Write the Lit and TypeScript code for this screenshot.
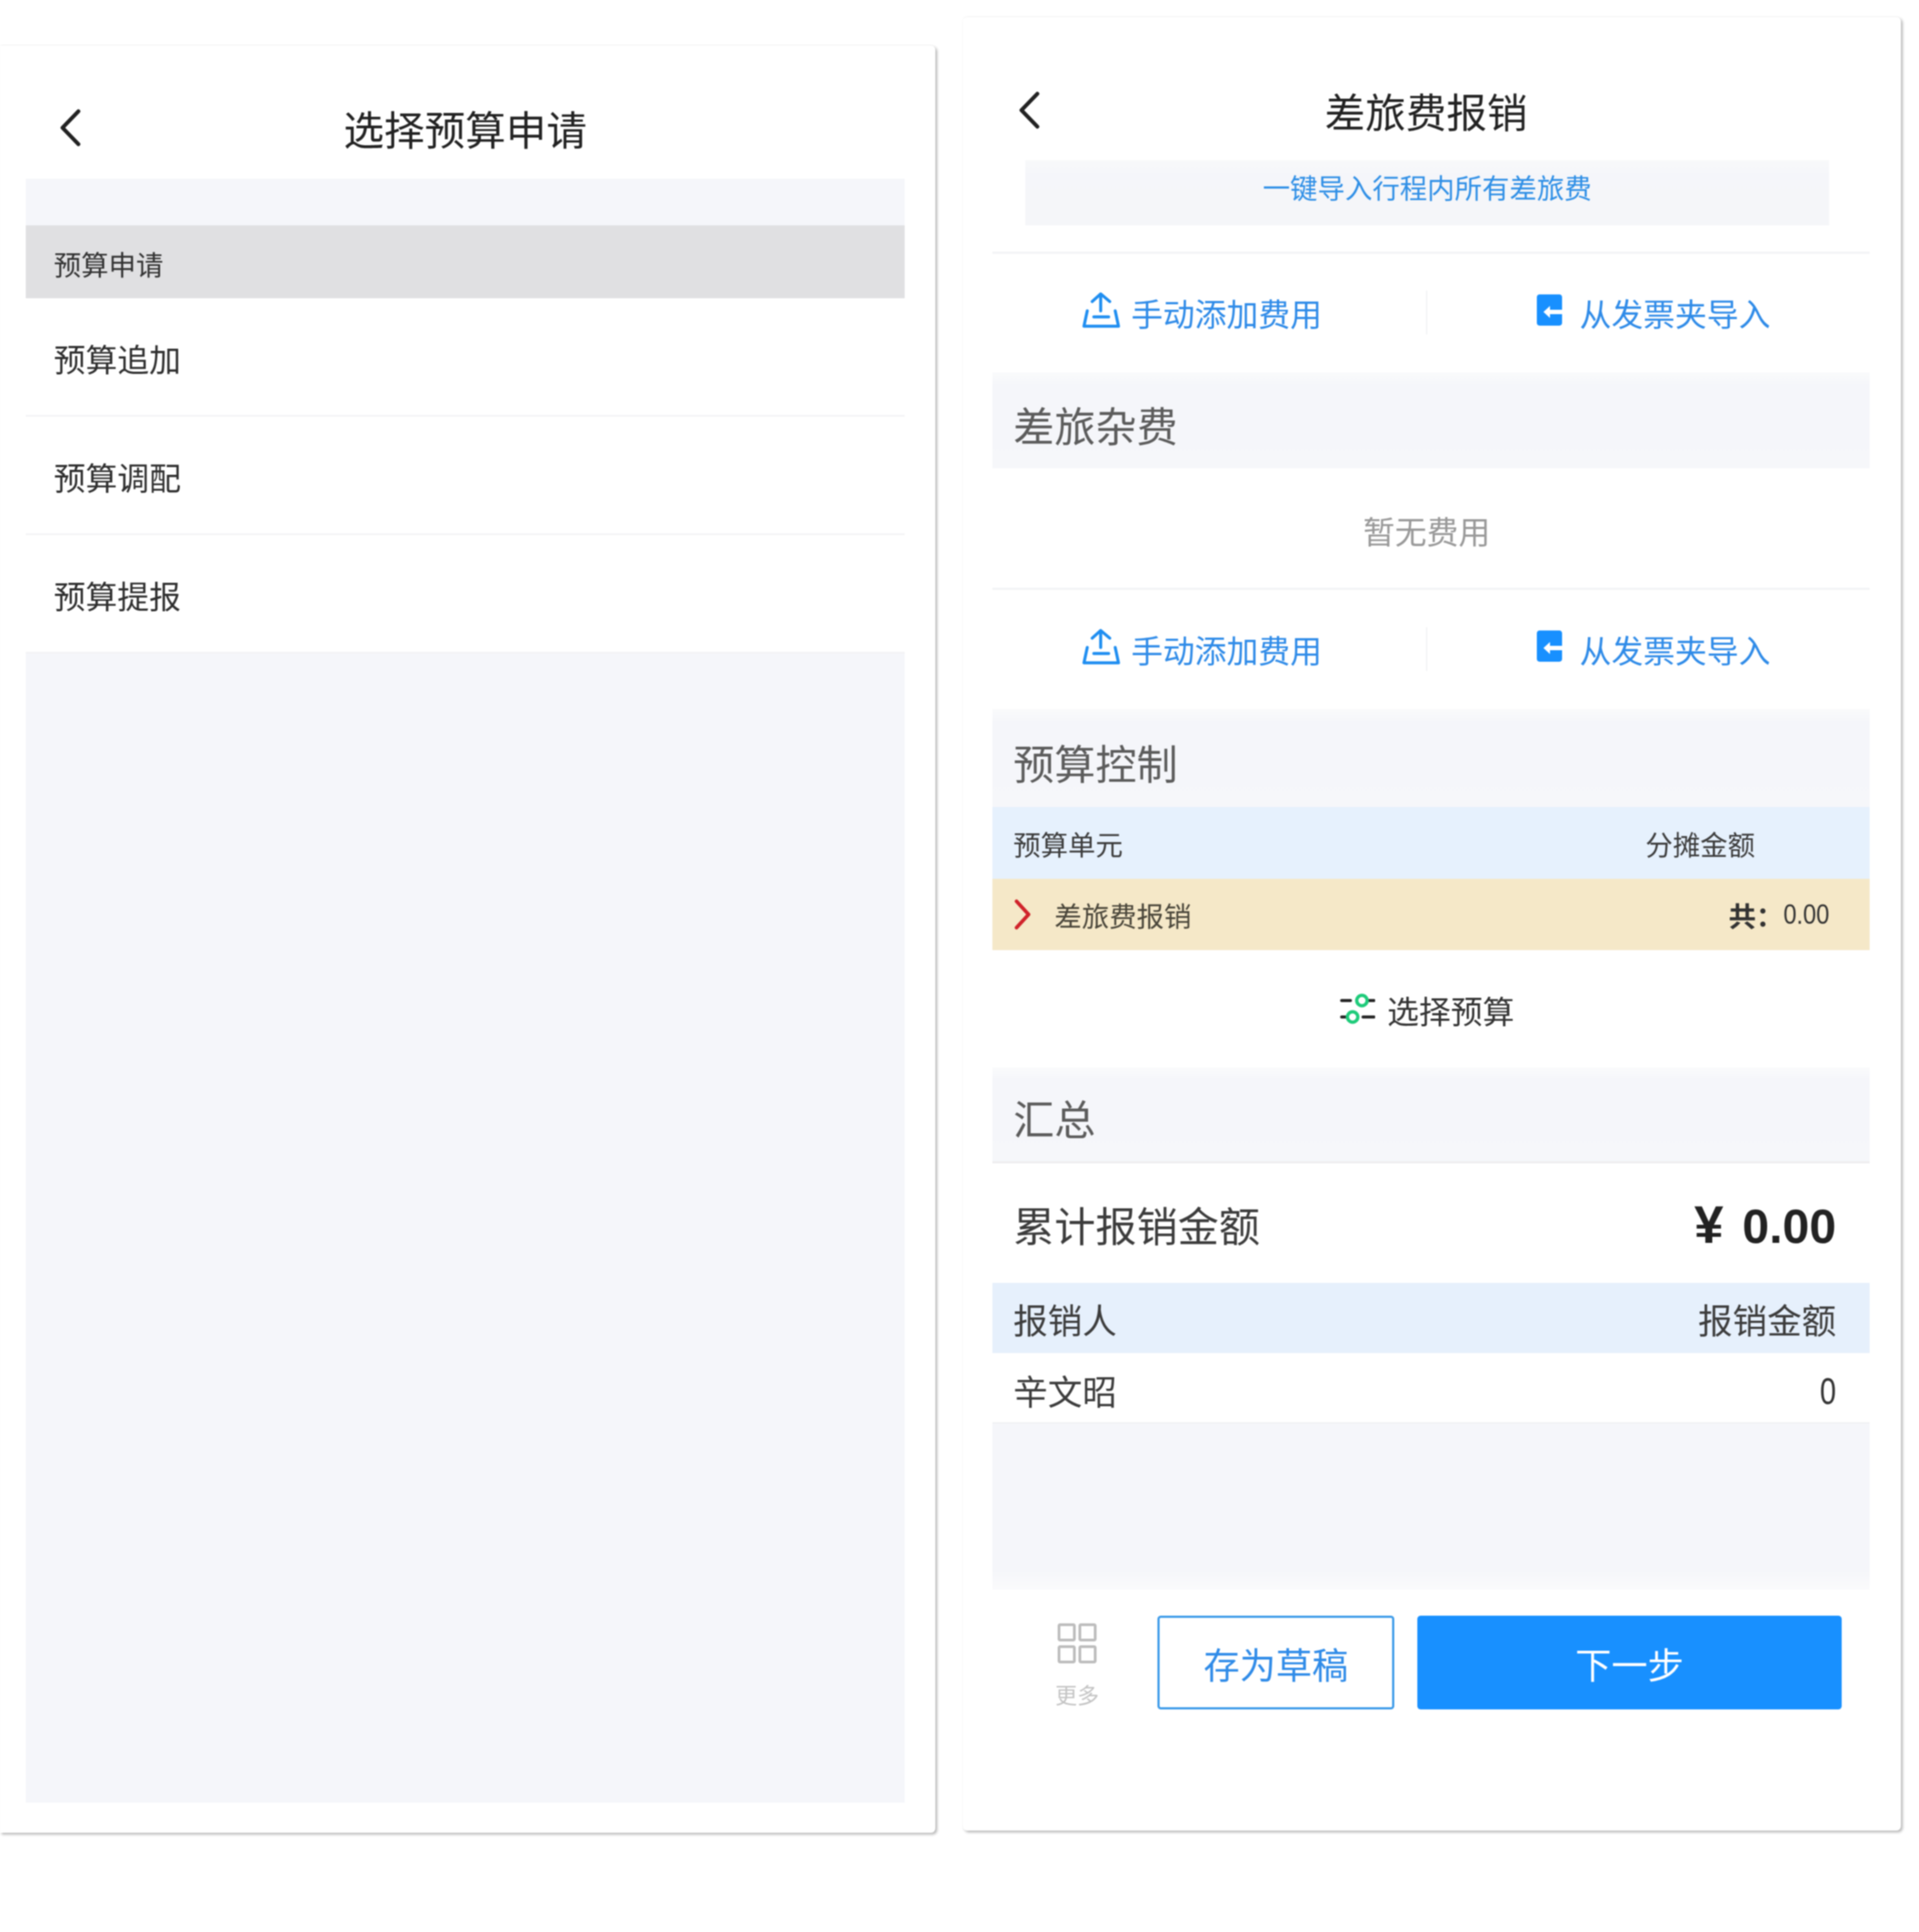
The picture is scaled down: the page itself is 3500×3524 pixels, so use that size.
import { LitElement, html, css } from "lit";
import { customElement } from "lit/decorators.js";

const chevron = html`<svg class="back" viewBox="0 0 38 68"><path d="M34 4 5 34l29 30" fill="none" stroke="#222" stroke-width="7" stroke-linecap="round" stroke-linejoin="round"/></svg>`;

const uploadIcon = html`<svg class="ic-up" viewBox="0 0 69 66" fill="none" stroke="#1f8ef1" stroke-width="5.5" stroke-linecap="round" stroke-linejoin="round"><path d="M18 18 33.5 4 50 18M33.5 5v30M9 35 3 63h63l-6-28M21 46h27"/></svg>`;

const invoiceIcon = html`<svg class="ic-in" viewBox="0 0 46 57"><rect width="46" height="57" rx="5" fill="#1890ff"/><path d="M12 32 24 21v7h22v8H24v7z" fill="#fff"/></svg>`;

const sliderIcon = html`<svg class="ic-sl" viewBox="0 0 64 58" fill="none" stroke-width="5.5" stroke-linecap="round"><path d="M3 14h16M53 14h9M3 44h7M42 44h20" stroke="#222"/><circle cx="40" cy="14" r="9.5" stroke="#1ecb7a" stroke-width="6"/><circle cx="23" cy="44" r="9.5" stroke="#1ecb7a" stroke-width="6"/></svg>`;

const moreIcon = html`<svg class="ic-more" viewBox="0 0 71 73" fill="none" stroke="#bdbdbd" stroke-width="5"><rect x="2.5" y="2.5" width="28" height="28" rx="2"/><rect x="40.5" y="2.5" width="28" height="28" rx="2"/><rect x="2.5" y="42.5" width="28" height="28" rx="2"/><rect x="40.5" y="42.5" width="28" height="28" rx="2"/></svg>`;

const redChevron = html`<svg class="ic-red" viewBox="0 0 30 56"><path d="M4 4 26 28 4 52" fill="none" stroke="#d0232b" stroke-width="6.5" stroke-linecap="round" stroke-linejoin="round"/></svg>`;

@customElement("app-root")
export class AppRoot extends LitElement {
  static styles = css`
    :host { display: block; width: 3500px; height: 3524px; background: #fff; overflow: hidden;
      font-family: "Noto Sans CJK SC", "Noto Sans", sans-serif; color: #333; line-height: 1; }
    * { box-sizing: border-box; }
    .page { display: flex; align-items: flex-start; gap: 50px; }
    .card { background: #fff; border-radius: 0 8px 8px 0; flex: none; filter: blur(1.2px);
      box-shadow: 3px 3px 5px rgba(0,0,0,.3), 0 -1px 2px rgba(0,0,0,.06); }
    .left { width: 1706px; height: 3260px; margin-top: 83px; padding: 0 56px 0 47px; }
    .right { width: 1711px; height: 3308px; margin-top: 31px; padding: 0 57px 0 54px; border-radius: 8px; }

    .head { display: grid; grid-template-columns: 1fr auto 1fr; align-items: center; color: #222; font-size: 74px; }
    .left .head { height: 243px; padding-top: 57px; }
    .right .head { height: 261px; padding-top: 79px; }
    .left .back { margin-left: 62px; }
    .right .back { margin-left: 48px; }
    .right .head span { margin-right: 18px; }
    .back { width: 38px; height: 68px; display: block; }

    .gap { height: 85px; background: #f5f6fa; }
    .band { height: 133px; padding: 4px 0 0 51px; display: flex; align-items: center; background: #e0e0e2; font-size: 50px; color: #333; }
    .item { height: 216px; padding: 4px 0 0 51px; display: flex; align-items: center; font-size: 58px; color: #2e2e2e; border-bottom: 3px solid #f3f3f5; }
    .rest { height: 2096px; background: #f5f6fa; }

    .import { height: 119px; margin: 0 74px 0 60px; padding-bottom: 23px; display: flex; align-items: center; justify-content: center;
      background: linear-gradient(#f8f9fa, #f5f6fa 25%, #f5f6f9); color: #2f8fe6; font-size: 50px; }
    .space { height: 48px; }
    .line { height: 4px; background: #f3f4f6; }

    .actions { display: flex; align-items: center; padding-bottom: 2px; color: #2f8be8; font-size: 58px; }
    .actions.a1 { height: 216px; }
    .actions.a2 { height: 217px; }
    .half { display: flex; align-items: center; }
    .half.l { width: 791px; padding-left: 164px; gap: 20px; }
    .half.r { flex: 1; padding-left: 200px; gap: 32px; }
    .split { width: 2px; height: 80px; background: #f0f1f3; }
    .ic-up { width: 69px; height: 66px; margin-bottom: 10px; }
    .ic-in { width: 46px; height: 57px; margin-bottom: 10px; }

    .section { padding: 14px 0 0 38px; display: flex; align-items: center; background: linear-gradient(#fafbfc, #f5f6fa 14%, #f6f7fa); font-size: 75px; color: #5c5c5c; }
    .h175 { height: 175px; }
    .h179 { height: 179px; }
    .sum { height: 175px; padding-top: 10px; border-bottom: 4px solid #eeeef0; }

    .empty { height: 218px; display: flex; align-items: center; justify-content: center; padding: 8px 16px 0 0; font-size: 58px; color: #999; }

    .th { height: 131px; padding: 0 209px 0 38px; display: flex; align-items: center; justify-content: space-between; background: #e6f1fd; font-size: 50px; color: #3c3c3c; }
    .budget { height: 130px; padding: 0 74px 0 40px; display: flex; align-items: center; background: #f5e8c8; font-size: 50px; color: #4a463a; }
    .ic-red { width: 30px; height: 56px; margin-right: 43px; }
    .budget .t { flex: 1; }
    .budget .sumtxt { font-weight: 700; color: #333; }
    .digits { font-family: "Liberation Sans", sans-serif; display: inline-block; transform-origin: right center; }
    .budget .digits { font-size: 50px; color: #333; margin-left: -14px; transform: scaleX(.86); }

    .select { height: 214px; display: flex; align-items: center; justify-content: center; gap: 22px; padding: 4px 14px 0 0; font-size: 58px; color: #333; }
    .ic-sl { width: 64px; height: 58px; margin-bottom: 4px; }

    .total { height: 218px; padding: 2px 61px 0 38px; display: flex; align-items: center; justify-content: space-between; font-size: 75px; color: #3c3c3c; }
    .amount { font-family: "Liberation Sans", Arial, sans-serif; font-size: 88px; font-weight: 700; color: #222; padding-top: 4px; }
    .yen { font-size: 96px; margin-right: 10px; }
    .rowh, .rowd { padding: 0 61px 0 38px; display: flex; align-items: center; justify-content: space-between; font-size: 63px; color: #3c3c3c; }
    .rowh { height: 128px; background: #e6f0fc; }
    .rowd { height: 129px; padding-top: 6px; border-bottom: 3px solid #f1f2f4; }
    .rowd .digits { font-size: 68px; color: #333; padding-top: 6px; transform: scaleX(.78); }

    .spacer { height: 303px; background: linear-gradient(#f5f6fa, #f5f6fa 88%, #fbfbfc); }
    .footer { display: flex; align-items: flex-start; padding: 47px 0 0 119px; }
    .more { width: 71px; padding-top: 14px; display: flex; flex-direction: column; align-items: center; gap: 36px; font-size: 40px; color: #c4c4c4; margin-right: 111px; white-space: nowrap; }
    .ic-more { width: 71px; height: 73px; display: block; }
    .btn { height: 171px; display: flex; align-items: center; justify-content: center; border-radius: 6px; font-size: 66px; }
    .draft { width: 432px; border: 4px solid #3d9be9; color: #2f8be8; margin-right: 42px; background: #fff; }
    .next { width: 774px; background: #1890ff; color: #fff; }
  `;

  private actionRow(cls: string) {
    return html`<div class="actions ${cls}">
      <div class="half l">${uploadIcon}<span>手动添加费用</span></div>
      <div class="split"></div>
      <div class="half r">${invoiceIcon}<span>从发票夹导入</span></div>
    </div>`;
  }

  render() {
    return html`<div class="page">
      <section class="card left">
        <div class="head">${chevron}<span>选择预算申请</span><i></i></div>
        <div class="gap"></div>
        <div class="band">预算申请</div>
        ${["预算追加", "预算调配", "预算提报"].map((t) => html`<div class="item">${t}</div>`)}
        <div class="rest"></div>
      </section>

      <section class="card right">
        <div class="head">${chevron}<span>差旅费报销</span><i></i></div>
        <div class="import">一键导入行程内所有差旅费</div>
        <div class="space"></div>
        <div class="line"></div>
        ${this.actionRow("a1")}
        <div class="section h175">差旅杂费</div>
        <div class="empty">暂无费用</div>
        <div class="line"></div>
        ${this.actionRow("a2")}
        <div class="section h179">预算控制</div>
        <div class="th"><span>预算单元</span><span>分摊金额</span></div>
        <div class="budget">${redChevron}<span class="t">差旅费报销</span><span class="sumtxt">共：</span><span class="digits">0.00</span></div>
        <div class="select">${sliderIcon}<span>选择预算</span></div>
        <div class="section sum">汇总</div>
        <div class="total"><span>累计报销金额</span><span class="amount"><span class="yen">¥</span> 0.00</span></div>
        <div class="rowh"><span>报销人</span><span>报销金额</span></div>
        <div class="rowd"><span>辛文昭</span><span class="digits">0</span></div>
        <div class="spacer"></div>
        <div class="footer">
          <div class="more">${moreIcon}<span>更多</span></div>
          <div class="btn draft">存为草稿</div>
          <div class="btn next">下一步</div>
        </div>
      </section>
    </div>`;
  }
}
